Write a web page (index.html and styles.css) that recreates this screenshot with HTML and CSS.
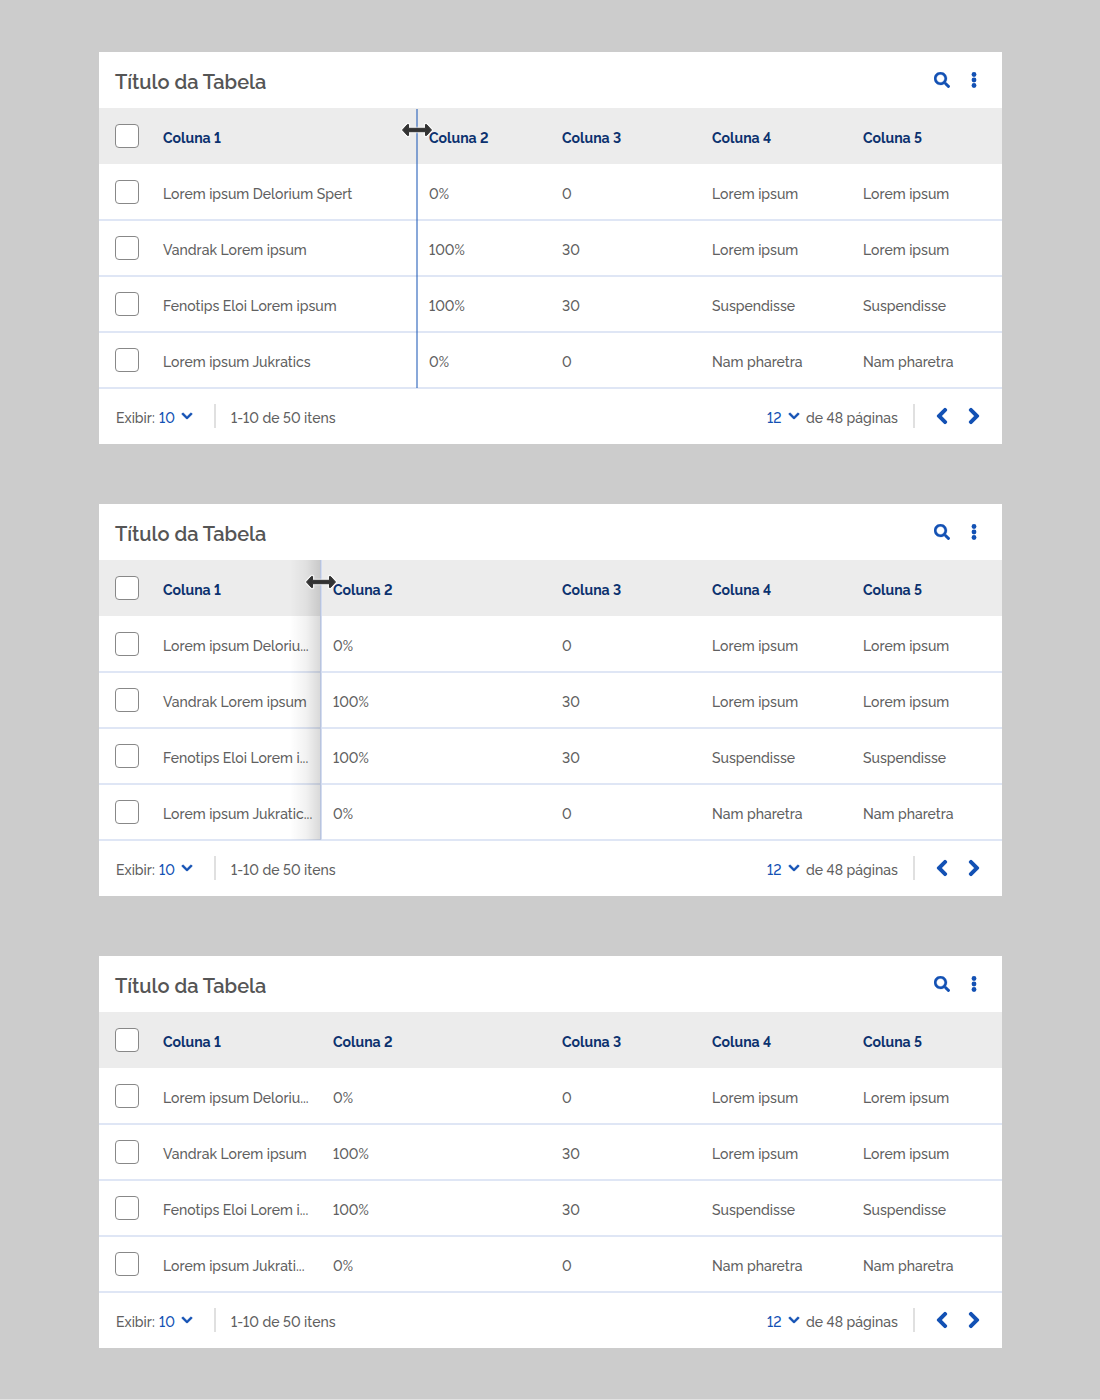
FILE: index.html
```html
<!DOCTYPE html>
<html lang="pt-BR">
<head>
<meta charset="utf-8">
<title>Título da Tabela</title>
<link rel="stylesheet" href="styles.css">
</head>
<body>
<svg class="defs" aria-hidden="true">
  <symbol id="search" viewBox="0 0 512 512"><path stroke="currentColor" stroke-width="8" d="M505 442.700L405.300 343c-4.500-4.500-10.600-7-17-7H372c27.600-35.300 44-79.700 44-128C416 93.100 322.900 0 208 0S0 93.100 0 208s93.100 208 208 208c48.300 0 92.700-16.400 128-44v16.300c0 6.400 2.500 12.500 7 17l99.700 99.700c9.400 9.400 24.600 9.400 33.900 0l28.300-28.300c9.400-9.400 9.400-24.600.1-34zM208 336c-70.700 0-128-57.200-128-128 0-70.700 57.200-128 128-128 70.700 0 128 57.200 128 128 0 70.700-57.200 128-128 128z"/></symbol>
  <symbol id="dots" viewBox="0 0 16 16"><circle cx="8" cy="2.500" r="2.400"/><circle cx="8" cy="8" r="2.400"/><circle cx="8" cy="13.500" r="2.400"/></symbol>
  <symbol id="down" viewBox="0 0 448 512"><path stroke="currentColor" stroke-width="28" d="M207.029 381.476L12.686 187.132c-9.373-9.373-9.373-24.569 0-33.941l22.667-22.667c9.357-9.357 24.522-9.375 33.901-.04L224 284.505l154.745-154.021c9.379-9.335 24.544-9.317 33.901.04l22.667 22.667c9.373 9.373 9.373 24.569 0 33.941L240.971 381.476c-9.373 9.372-24.569 9.372-33.942 0z"/></symbol>
  <symbol id="prev" viewBox="0 0 320 512"><path stroke="currentColor" stroke-width="32" d="M34.520 239.030L228.870 44.690c9.370-9.370 24.570-9.370 33.940 0l22.670 22.670c9.360 9.360 9.370 24.520.04 33.900L131.490 256l154.020 154.750c9.340 9.380 9.320 24.540-.04 33.900l-22.670 22.670c-9.370 9.370-24.570 9.370-33.940 0L34.520 272.970c-9.370-9.370-9.370-24.570 0-33.940z"/></symbol>
  <symbol id="next" viewBox="0 0 320 512"><path stroke="currentColor" stroke-width="32" d="M285.476 272.971L91.132 467.314c-9.373 9.373-24.569 9.373-33.941 0l-22.667-22.667c-9.357-9.357-9.375-24.522-.04-33.901L188.505 256 34.484 101.255c-9.335-9.379-9.317-24.544.04-33.901l22.667-22.667c9.373-9.373 24.569-9.373 33.941 0L285.475 239.030c9.373 9.372 9.373 24.568.001 33.941z"/></symbol>
  <symbol id="resize" viewBox="0 0 34 18"><path d="M2 9l5.500-6h1.500v4h16v-4h1.500l5.500 6-5.500 6h-1.500v-4h-16v4h-1.500z" fill="none" stroke="#fff" stroke-opacity=".6" stroke-width="2.600" stroke-linejoin="round"/><path d="M2.500 9l5-5.500h1v3.800h17v-3.800h1l5 5.500-5 5.500h-1v-3.800h-17v3.800h-1z" fill="#333" stroke="#333" stroke-linejoin="round"/></symbol>
</svg>
<main class="page">
  <section class="card wide">
    <header class="bar"><h2>Título da Tabela</h2><svg class="icon"><use href="#search"/></svg><svg class="icon"><use href="#dots"/></svg></header>
    <div class="table">
      <div class="row head"><i class="check"></i><b>Coluna 1</b><b>Coluna 2</b><b>Coluna 3</b><b>Coluna 4</b><b>Coluna 5</b></div>
      <div class="row"><i class="check"></i><span>Lorem ipsum Delorium Spert</span><span>0%</span><span>0</span><span>Lorem ipsum</span><span>Lorem ipsum</span></div>
      <div class="row"><i class="check"></i><span>Vandrak Lorem ipsum</span><span>100%</span><span>30</span><span>Lorem ipsum</span><span>Lorem ipsum</span></div>
      <div class="row"><i class="check"></i><span>Fenotips Eloi Lorem ipsum</span><span>100%</span><span>30</span><span>Suspendisse</span><span>Suspendisse</span></div>
      <div class="row"><i class="check"></i><span>Lorem ipsum Jukratics</span><span>0%</span><span>0</span><span>Nam pharetra</span><span>Nam pharetra</span></div>
      <div class="divider"></div><svg class="cursor"><use href="#resize"/></svg>
    </div>
    <footer class="foot"><span class="show">Exibir:</span><span class="size">10</span><svg class="caret"><use href="#down"/></svg><i class="sep"></i><span class="range">1-10 de 50 itens</span><span class="current">12</span><svg class="caret"><use href="#down"/></svg><span class="pages">de 48 páginas</span><i class="sep"></i><svg class="icon"><use href="#prev"/></svg><svg class="icon"><use href="#next"/></svg></footer>
  </section>
  <section class="card shaded">
    <header class="bar"><h2>Título da Tabela</h2><svg class="icon"><use href="#search"/></svg><svg class="icon"><use href="#dots"/></svg></header>
    <div class="table">
      <div class="row head"><i class="check"></i><b>Coluna 1</b><b>Coluna 2</b><b>Coluna 3</b><b>Coluna 4</b><b>Coluna 5</b></div>
      <div class="row"><i class="check"></i><span>Lorem ipsum Deloriu...</span><span>0%</span><span>0</span><span>Lorem ipsum</span><span>Lorem ipsum</span></div>
      <div class="row"><i class="check"></i><span>Vandrak Lorem ipsum</span><span>100%</span><span>30</span><span>Lorem ipsum</span><span>Lorem ipsum</span></div>
      <div class="row"><i class="check"></i><span>Fenotips Eloi Lorem i...</span><span>100%</span><span>30</span><span>Suspendisse</span><span>Suspendisse</span></div>
      <div class="row"><i class="check"></i><span>Lorem ipsum Jukratic...</span><span>0%</span><span>0</span><span>Nam pharetra</span><span>Nam pharetra</span></div>
      <div class="divider"></div><svg class="cursor"><use href="#resize"/></svg>
    </div>
    <footer class="foot"><span class="show">Exibir:</span><span class="size">10</span><svg class="caret"><use href="#down"/></svg><i class="sep"></i><span class="range">1-10 de 50 itens</span><span class="current">12</span><svg class="caret"><use href="#down"/></svg><span class="pages">de 48 páginas</span><i class="sep"></i><svg class="icon"><use href="#prev"/></svg><svg class="icon"><use href="#next"/></svg></footer>
  </section>
  <section class="card">
    <header class="bar"><h2>Título da Tabela</h2><svg class="icon"><use href="#search"/></svg><svg class="icon"><use href="#dots"/></svg></header>
    <div class="table">
      <div class="row head"><i class="check"></i><b>Coluna 1</b><b>Coluna 2</b><b>Coluna 3</b><b>Coluna 4</b><b>Coluna 5</b></div>
      <div class="row"><i class="check"></i><span>Lorem ipsum Deloriu...</span><span>0%</span><span>0</span><span>Lorem ipsum</span><span>Lorem ipsum</span></div>
      <div class="row"><i class="check"></i><span>Vandrak Lorem ipsum</span><span>100%</span><span>30</span><span>Lorem ipsum</span><span>Lorem ipsum</span></div>
      <div class="row"><i class="check"></i><span>Fenotips Eloi Lorem i...</span><span>100%</span><span>30</span><span>Suspendisse</span><span>Suspendisse</span></div>
      <div class="row"><i class="check"></i><span>Lorem ipsum Jukrati...</span><span>0%</span><span>0</span><span>Nam pharetra</span><span>Nam pharetra</span></div>
    </div>
    <footer class="foot"><span class="show">Exibir:</span><span class="size">10</span><svg class="caret"><use href="#down"/></svg><i class="sep"></i><span class="range">1-10 de 50 itens</span><span class="current">12</span><svg class="caret"><use href="#down"/></svg><span class="pages">de 48 páginas</span><i class="sep"></i><svg class="icon"><use href="#prev"/></svg><svg class="icon"><use href="#next"/></svg></footer>
  </section>
</main>
</body>
</html>
```
FILE: styles.css
```css
* { box-sizing: border-box; }
html { background: #e2e2e2; }
body { margin: 0; background: #ccc; color: #606060; font: 500 14px/20px Raleway, Lato, sans-serif; font-variant-numeric: lining-nums; }
.defs { display: none; }
.page { display: flex; flex-direction: column; gap: 60px; padding: 52px 98px 51px 99px; height: 1399px; }
.card { --split: 170px; height: 392px; background: #fff; }
.wide { --split: 266px; }
.bar { display: flex; align-items: center; gap: 16px; height: 56px; padding: 0 20px 0 16px; }
h2 { flex: 1; margin: 4px 0 0; color: #555; font-size: 20px; line-height: 28px; font-weight: 600; }
.icon { width: 16px; height: 16px; flex: none; color: #1351b4; fill: currentColor; overflow: visible; }
.table { position: relative; }
.row { display: grid; grid-template-columns: 48px var(--split) calc(399px - var(--split)) 150px 151px 1fr; align-items: center; height: 56px; padding-left: 16px; box-shadow: inset 0 -1px #dfe6f5, 0 1px #dfe6f5; white-space: nowrap; }
.row span, .row b { padding-top: 4px; }
.head { background: #ececec; box-shadow: none; color: #0c326f; }
.head b { font-weight: 700; }
.check { width: 24px; height: 24px; border: 1px solid #888; border-radius: 4px; background: #fff; }
.divider { position: absolute; left: calc(var(--split) + 51px); top: 1px; bottom: 0; width: 2px; background: rgba(19, 81, 180, .5); }
.shaded .divider { top: 0; width: 32px; margin-left: -30px; background: linear-gradient(90deg, transparent, rgba(0, 0, 0, .05) 50%, rgba(0, 0, 0, .16)); }
.shaded .divider::after { content: ""; position: absolute; right: 0; top: 0; bottom: 0; width: 2px; background: linear-gradient(90deg, #b9c4dd 50%, #d3dcf0 50%); }
.cursor { position: absolute; left: calc(var(--split) + 35px); top: 13px; width: 34px; height: 18px; }
.foot { display: flex; align-items: center; height: 56px; padding: 0 19px 0 17px; }
.foot span { padding-top: 4px; white-space: nowrap; }
.show { width: 43px; }
.size, .current { color: #1351b4; width: 22px; }
.foot .current { width: 21px; }
.caret { width: 12px; height: 12px; color: #1351b4; fill: currentColor; overflow: visible; }
.sep { width: 2px; height: 24px; margin: 0 15px 0 21px; background: #e0e0e0; }
.range { flex: 1; }
.pages { width: 92px; margin-left: 6px; }
.pages + .sep { margin: 0 18px 0 15px; }
.foot .icon { width: 18px; height: 18px; }
.foot .icon + .icon { margin-left: 14px; }
```
